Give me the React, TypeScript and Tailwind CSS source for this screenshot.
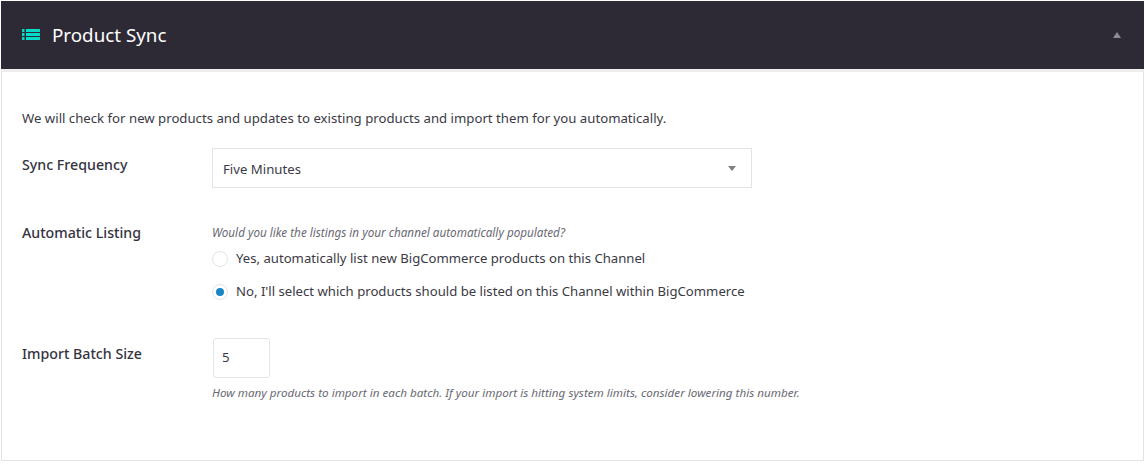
import React from "react";

function Row({ label, labelClass, children }: { label: string; labelClass: string; children: React.ReactNode }) {
  return (
    <div className="flex">
      <div className={`w-[190px] shrink-0 text-[14.2px] font-medium text-[#35333f] ${labelClass}`}>{label}</div>
      <div className="flex-1">{children}</div>
    </div>
  );
}

function Radio({ checked, label }: { checked?: boolean; label: string }) {
  return (
    <div className="flex items-center h-[20px]">
      <span className="w-[16px] h-[16px] rounded-full border border-[#e2e4ea] bg-white flex items-center justify-center">
        {checked && <span className="w-[8px] h-[8px] rounded-full bg-[#1b87c2]" />}
      </span>
      <span className="ml-[8px] text-[13.15px] text-[#3b3a45]">{label}</span>
    </div>
  );
}

export default function App() {
  return (
    <div className="w-[1145px] h-[464px] bg-white pt-px px-px font-['Noto_Sans','Open_Sans',sans-serif]">
      <div className="h-[68px] bg-[#2d2a36] flex items-center justify-between pl-[21px] pr-[23px]">
        <div className="flex items-center">
          <svg width="18" height="12" viewBox="0 0 18 12" fill="#00dcc8" className="-mt-px">
            <rect x="0" y="0" width="2.5" height="3" />
            <rect x="0" y="4" width="2.5" height="3" />
            <rect x="0" y="8" width="2.5" height="3" />
            <rect x="4" y="0" width="14" height="3" />
            <rect x="4" y="4" width="14" height="3" />
            <rect x="4" y="8" width="14" height="3" />
          </svg>
          <h1 className="ml-[12px] text-[18.8px] text-white">Product Sync</h1>
        </div>
        <svg width="8" height="6" viewBox="0 0 8 6" fill="#8b8b92">
          <path d="M4 0 L8 6 L0 6 Z" />
        </svg>
      </div>
      <div className="h-[392px] border-x border-b border-[#e2e2ea] border-t-[3px] border-t-[#eeeeee] pl-[20px] pt-[36px]">
        <p className="text-[13.2px] leading-[20px] text-[#3b3a45]">
          We will check for new products and updates to existing products and import them for you automatically.
        </p>
        <div className="mt-[20px]">
          <Row label="Sync Frequency" labelClass="pt-[6px]">
            <div className="w-[540px] h-[40px] border border-[#e2e4e8] flex items-center justify-between pl-[10px] pr-[15px] text-[13.2px] text-[#3b3a45]">
              <span className="pt-[3px]">Five Minutes</span>
              <svg width="8" height="5" viewBox="0 0 8 5" fill="#808080">
                <path d="M0 0 L8 0 L4 5 Z" />
              </svg>
            </div>
          </Row>
        </div>
        <div className="mt-[33px]">
          <Row label="Automatic Listing" labelClass="pt-[1px]">
            <p className="pt-[3px] text-[11.7px] leading-[16px] italic text-[#6a6973]">
              Would you like the listings in your channel automatically populated?
            </p>
            <div className="mt-[9px] flex flex-col gap-[13px]">
              <Radio label="Yes, automatically list new BigCommerce products on this Channel" />
              <Radio checked label="No, I'll select which products should be listed on this Channel within BigCommerce" />
            </div>
          </Row>
        </div>
        <div className="mt-[36px]">
          <Row label="Import Batch Size" labelClass="pt-[5px]">
            <div className="ml-px w-[57px] h-[40px] border border-[#e2e4ea] rounded-[3px] flex items-center pl-[8px] text-[13.2px] text-[#3b3a45]">
              5
            </div>
            <p className="mt-[7px] text-[11.66px] leading-[16px] italic text-[#6a6973]">
              How many products to import in each batch. If your import is hitting system limits, consider lowering this number.
            </p>
          </Row>
        </div>
      </div>
    </div>
  );
}
